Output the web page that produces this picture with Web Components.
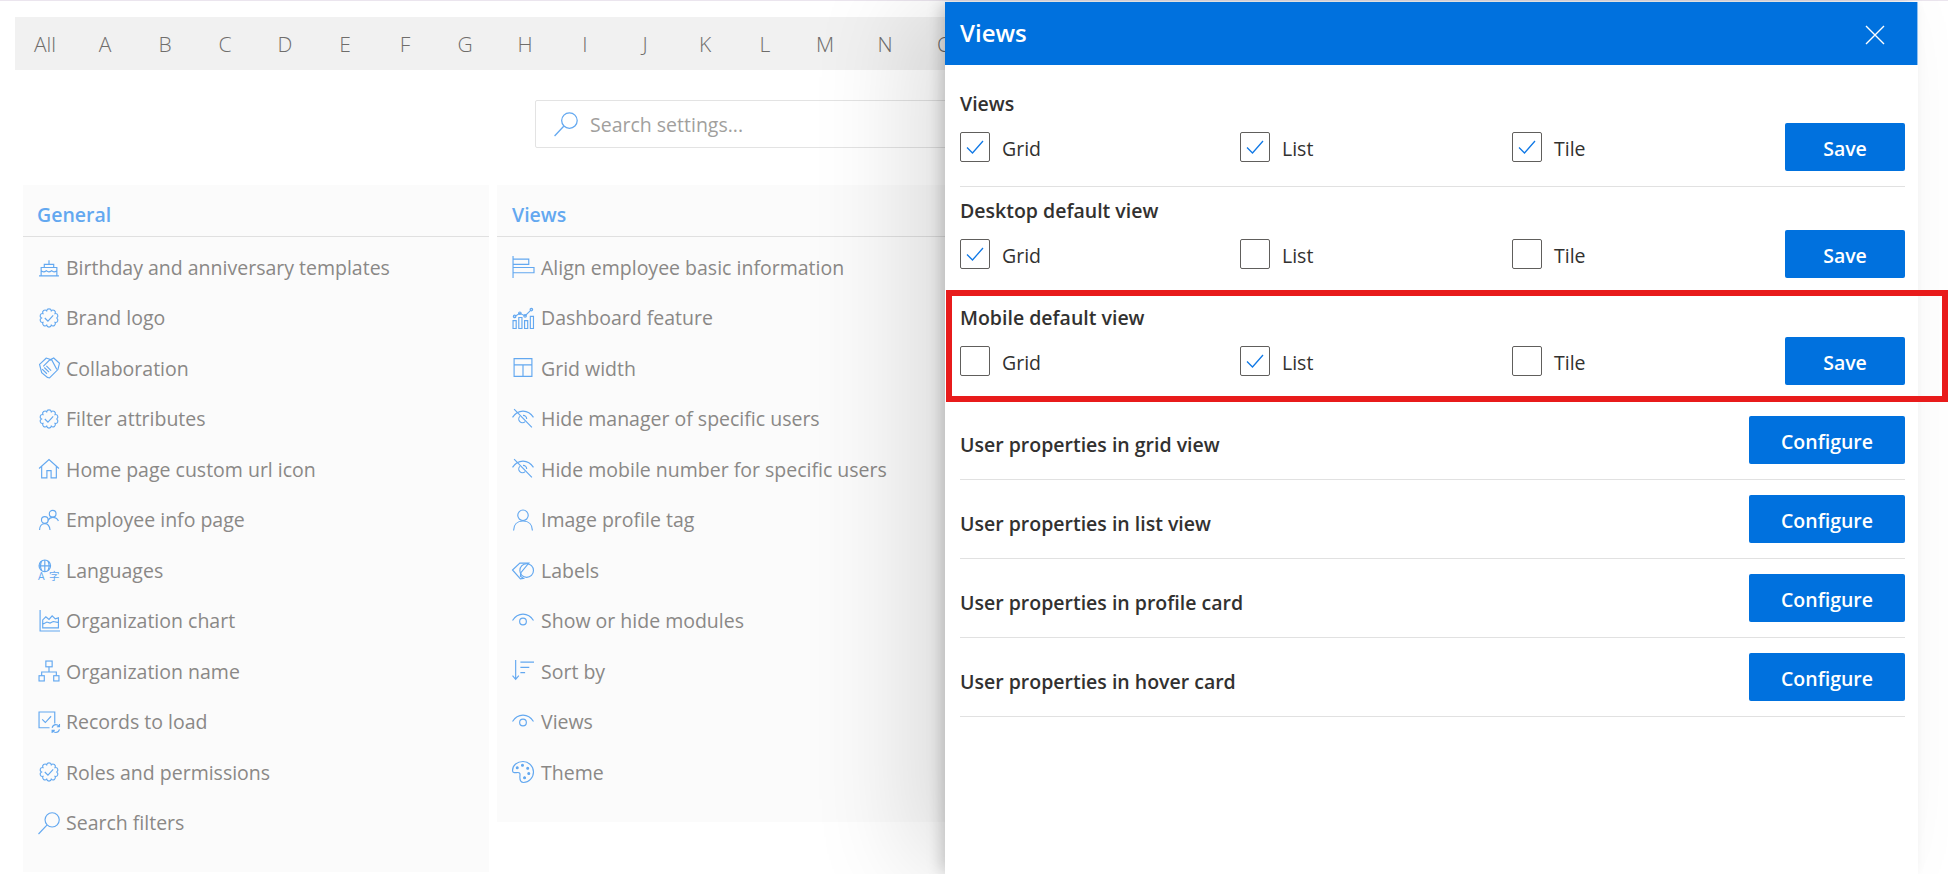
<!DOCTYPE html>
<html>
<head>
<meta charset="utf-8">
<title>Settings</title>
<style>
  html, body { margin: 0; height: 100%; background: #fff; overflow: hidden; }
  body { font-family: "Open Sans", "Noto Sans", sans-serif; }
</style>
</head>
<body>
<settings-page></settings-page>
<views-panel></views-panel>

<script>
// scalloped outline used by the badge icons
function scallop() {
  let d = '';
  for (let i = 0; i <= 10; i++) {
    const a = i * Math.PI / 5;
    const x = (10.5 + 7.2 * Math.cos(a)).toFixed(2);
    const y = (10.5 + 7.2 * Math.sin(a)).toFixed(2);
    d += i ? `A2.25 2.25 0 0 1 ${x} ${y}` : `M${x} ${y}`;
  }
  return d;
}

// stroke icons on a 21 unit grid
const ICONS = {
  cake: '<path d="M1 19h19M3 19v-8h15v8M3 14c1.500 1.500 3 1.500 5 0 1.500 1.500 3 1.500 5 0 1.500 1.500 3 1.500 5 0M6 11V8h9v3M10.500 8V4"/>',
  badge: `<path d="${scallop()}"/><path d="M6.500 10.500l3 3 5-5.500"/>`,
  shake: '<path d="M8 1L1.500 7l2 8 5.500 4.500 2 .5 8-8 1.500-6L15 1l-3 1.500z"/><path d="M5 9l6-6 2-.5 5 9.500M4 11.500l4.500 4.500M6 10l4.500 4.500M8 8.500l4.500 4.500"/>',
  home: '<path d="M1 10L10.500 1.500 20 10M3.500 8v11h5v-7h4v7h5V8"/>',
  people: '<circle cx="14" cy="4.500" r="3.200"/><path d="M9.500 11c1-1.800 2.500-3 4.500-3s4.500 1.200 5.500 3.500"/><circle cx="6.500" cy="10.500" r="3.200"/><path d="M1.500 20c0-3.500 2-6 5-6s4.500 2 5 6"/>',
  lang: '<circle cx="6.500" cy="6.500" r="5.500"/><path d="M1 6.500h11M6.500 1v11M3.500 2c-1.500 3-1.500 6 0 9M9.500 2c1.500 3 1.500 6 0 9"/><text x="0" y="20" font-size="10" font-family="Open Sans, sans-serif" stroke="none" fill="currentColor">A</text><text x="10.500" y="20" font-size="10" font-family="Noto Sans CJK SC, sans-serif" stroke="none" fill="currentColor">字</text>',
  chart: '<path d="M2 0v20h19"/><path d="M4.500 17V9.500l3-3 3 2.500 3-3.500 3 3 3-1V17zM4.500 13.500l4-2 3 1 3-1.500 5.500 1"/>',
  org: '<rect x="7.500" y="1" width="6" height="5.500"/><rect x="1" y="15" width="5" height="5"/><rect x="15" y="15" width="5" height="5"/><path d="M10.500 6.500v5M3.500 15v-3.500h14V15"/>',
  records: '<path d="M16 12V1H1v15h10"/><path d="M4 8l3 3 5.500-6"/><path d="M13.500 16c.5-2 2-3 3.500-3 1.200 0 2.200.5 3 1.500M20.500 12.500V15H18M20.500 17.500c-.5 1.800-2 3-3.500 3-1.200 0-2.200-.5-3-1.500M13.500 21v-2.500H16"/>',
  search: '<circle cx="13.500" cy="7.500" r="6.800"/><path d="M8.500 12.500L.5 21"/>',
  align: '<path d="M1 0v21M1 3h15v5H1M1 11h20v5H1"/>',
  dash: '<path d="M1 13h3v7.500H1zM6.500 10h3v10.500h-3zM12 13h3v7.500h-3zM17.500 9h3v11.500h-3zM2.500 9l5-3 5 2.500 6-6"/><circle cx="2.500" cy="9" r="1.200"/><circle cx="7.500" cy="6" r="1.200"/><circle cx="12.500" cy="8.500" r="1.200"/><circle cx="18.500" cy="2.500" r="1.200"/>',
  grid: '<path d="M2 1.500h17v17H2zM2 7.500h17M10.500 7.500v11"/>',
  hide: '<path d="M.5 9c2.500-4 5.500-6 10-6s7.500 2 10 6M2 1l17 17.500"/><path d="M7.500 8a3.500 3.500 0 1 0 5 5M10.500 7a3.500 3.500 0 0 1 3.500 3.500"/>',
  user: '<circle cx="10.500" cy="6" r="5"/><path d="M1.500 20.500c0-5.500 3.500-9 9-9s9 3.500 9 9"/>',
  label: '<path d="M.5 10.500L7.500 4h8.500l-7.500 9-.5 3.500 3 2-3 .5z"/><circle cx="14" cy="11" r="6.500"/>',
  eye: '<path d="M.5 10c2.500-4 5.500-6 10-6s7.500 2 10 6"/><circle cx="10.500" cy="11" r="3.200"/>',
  sort: '<path d="M3.500 0v18M.5 15l3 3.500 3-3.500M8 2h13M8 7h8.500M8 12h4.500"/>',
  theme: '<path d="M10.500 .5C5 .5.5 4 .5 9c0 3 3 2 5 2 3 0 2 2.500 2 4.500 0 3 1 5 3.500 5 5 0 9.500-4.500 9.500-10S16 .5 10.500.5z"/><circle cx="5" cy="6.500" r=".9" fill="currentColor"/><circle cx="10" cy="4" r=".9" fill="currentColor"/><circle cx="15" cy="7" r=".9" fill="currentColor"/><circle cx="16" cy="12" r=".9" fill="currentColor"/><circle cx="12" cy="16" r=".9" fill="currentColor"/>'
};

class SetIcon extends HTMLElement {
  connectedCallback() {
    const root = this.attachShadow({ mode: 'open' });
    root.innerHTML = `
      <style>
        :host { display: block; width: var(--icon-size, 22px); height: var(--icon-size, 22px); color: #63a8f0; flex-shrink: 0; }
        svg { display: block; width: 100%; height: 100%; fill: none; stroke: currentColor; stroke-width: 1.1; overflow: visible; }
      </style>
      <svg viewBox="0 0 21 21">${ICONS[this.getAttribute('name')]}</svg>`;
  }
}
customElements.define('set-icon', SetIcon);

class SettingsCard extends HTMLElement {
  connectedCallback() {
    const items = JSON.parse(this.getAttribute('items'));
    const root = this.attachShadow({ mode: 'open' });
    root.innerHTML = `
      <style>
        :host { display: block; background: #fbfbfb; box-sizing: border-box; }
        h3 { margin: 0; height: 52px; box-sizing: border-box; padding: 13px 15px 0 var(--head-left, 15px); border-bottom: 1px solid #e0e0e0;
             font-size: 19.5px; font-weight: 600; line-height: 34px; color: #63a8f0; }
        ul { list-style: none; margin: 0; padding: 5px 15px 0; }
        li { display: flex; align-items: center; gap: var(--item-gap, 7px); height: 50.5px; font-size: 19.5px; color: #8a8886; white-space: nowrap; }
      </style>
      <h3>${this.getAttribute('heading')}</h3>
      <ul>${items.map(i => `<li><set-icon name="${i[0]}"></set-icon><span>${i[1]}</span></li>`).join('')}</ul>`;
  }
}
customElements.define('settings-card', SettingsCard);

class SettingsPage extends HTMLElement {
  connectedCallback() {
    const letters = ['All', ...'ABCDEFGHIJKLMNO'];
    const general = [['cake','Birthday and anniversary templates'],['badge','Brand logo'],['shake','Collaboration'],['badge','Filter attributes'],['home','Home page custom url icon'],['people','Employee info page'],['lang','Languages'],['chart','Organization chart'],['org','Organization name'],['records','Records to load'],['badge','Roles and permissions'],['search','Search filters']];
    const views = [['align','Align employee basic information'],['dash','Dashboard feature'],['grid','Grid width'],['hide','Hide manager of specific users'],['hide','Hide mobile number for specific users'],['user','Image profile tag'],['label','Labels'],['eye','Show or hide modules'],['sort','Sort by'],['eye','Views'],['theme','Theme']];
    const root = this.attachShadow({ mode: 'open' });
    root.innerHTML = `
      <style>
        :host { display: block; border-top: 1px solid #ebe5ee; height: 873px; overflow: hidden; box-sizing: border-box; }
        .letters { display: flex; overflow: hidden; margin: 16px 0 0 15px; height: 53px; width: 1100px; background: #f1f1f1; font-size: 21px; font-weight: 300; color: #6f6d6b; align-items: center; }
        .letters span { width: 60px; text-align: center; flex-shrink: 0; }
        .search { display: flex; align-items: center; gap: 12px; box-sizing: border-box; margin: 30px 0 0 535px; width: 500px; height: 48px; padding-left: 18px;
                  border: 1px solid #e3e3e3; border-radius: 2px; font-size: 19.5px; color: #a19f9d; --icon-size: 24px; }
        .cards { display: flex; gap: 8px; margin: 37px 0 0 23px; align-items: flex-start; }
        settings-card:nth-child(1) { width: 466px; height: 687px; --item-gap: 6px; --head-left: 14px; }
        settings-card:nth-child(2) { width: 600px; height: 637px; }
      </style>
      <div class="letters">${letters.map(l => `<span>${l}</span>`).join('')}</div>
      <div class="search"><set-icon name="search"></set-icon><span>Search settings...</span></div>
      <div class="cards">
        <settings-card heading="General" items='${JSON.stringify(general)}'></settings-card>
        <settings-card heading="Views" items='${JSON.stringify(views)}'></settings-card>
      </div>`;
  }
}
customElements.define('settings-page', SettingsPage);

class ViewCheck extends HTMLElement {
  connectedCallback() {
    const on = this.hasAttribute('checked');
    const root = this.attachShadow({ mode: 'open' });
    root.innerHTML = `
      <style>
        :host { display: flex; align-items: center; gap: 12px; font-size: 19.5px; color: #323130; }
        .box { width: 28px; height: 28px; border: 1px solid #605e5c; border-radius: 2px; display: flex; align-items: center; justify-content: center; }
        svg { width: 18px; height: 18px; fill: none; stroke: #0f78e6; stroke-width: 1.3; }
        span { padding-top: 2px; }
      </style>
      <div class="box">${on ? '<svg viewBox="0 0 18 18"><path d="M1 9.500l5.500 5.500L17 3"/></svg>' : ''}</div>
      <span><slot></slot></span>`;
  }
}
customElements.define('view-check', ViewCheck);

class ActionButton extends HTMLElement {
  connectedCallback() {
    const root = this.attachShadow({ mode: 'open' });
    root.innerHTML = `
      <style>
        :host { display: flex; align-items: center; justify-content: center; height: 48px; box-sizing: border-box; padding-top: 2px; background: #0071de; color: #fff;
                border-radius: 2px; font-size: 19.5px; font-weight: 600; }
      </style><slot></slot>`;
  }
}
customElements.define('action-button', ActionButton);

class ViewGroup extends HTMLElement {
  connectedCallback() {
    const checks = (this.getAttribute('checks') || '').split(',');
    const cell = n => `<view-check ${checks.includes(n) ? 'checked' : ''}>${n}</view-check>`;
    const root = this.attachShadow({ mode: 'open' });
    root.innerHTML = `
      <style>
        :host { display: block; height: 107px; box-sizing: border-box; border-bottom: 1px solid #e1e1e1; }
        h4 { margin: 0; height: 43px; box-sizing: border-box; padding-top: 9px; font-size: 19.5px; font-weight: 600; line-height: 30px; color: #323130; }
        .row { display: grid; grid-template-columns: 280px 272px 273px 120px; align-items: center; height: 48px; }
      </style>
      <h4>${this.getAttribute('heading')}</h4>
      <div class="row">${cell('Grid')}${cell('List')}${cell('Tile')}<action-button>Save</action-button></div>`;
  }
}
customElements.define('view-group', ViewGroup);

class ConfigRow extends HTMLElement {
  connectedCallback() {
    const root = this.attachShadow({ mode: 'open' });
    root.innerHTML = `
      <style>
        :host { display: flex; justify-content: space-between; height: 79px; box-sizing: border-box; padding-top: 15px; border-bottom: 1px solid #e1e1e1; font-size: 19.5px; font-weight: 600; color: #323130; }
        span { padding-top: 14px; line-height: 30px; }
        action-button { width: 156px; }
      </style>
      <span><slot></slot></span><action-button>Configure</action-button>`;
  }
}
customElements.define('config-row', ConfigRow);

class ViewsPanel extends HTMLElement {
  connectedCallback() {
    const root = this.attachShadow({ mode: 'open' });
    root.innerHTML = `
      <style>
        :host { position: absolute; top: 2px; left: 945px; width: 973px; bottom: 0; background: #fff;
                box-shadow: -45px 0 90px -5px rgba(0,0,0,.12), -6px 0 14px -2px rgba(0,0,0,.18); }
        header { height: 63px; box-sizing: border-box; background: #0071de; border-right: 1px solid #8fc0f0; color: #fff; display: flex; align-items: center; justify-content: space-between; padding: 0 32px 0 15px; font-size: 24px; font-weight: 600; }
        header span { margin-top: -2px; }
        svg { width: 20px; height: 20px; stroke: #fff; stroke-width: 1.4; fill: none; margin-top: 3px; }
        main { padding: 15px 13px 0 15px; }
        .mark { position: absolute; left: 1px; top: 288px; width: 1002px; height: 112px; box-sizing: border-box; border: 6px solid #e81b1b; pointer-events: none; }
      </style>
      <header><span>Views</span><svg viewBox="0 0 20 20"><path d="M1 1l18 18M19 1L1 19"/></svg></header>
      <main>
        <view-group heading="Views" checks="Grid,List,Tile"></view-group>
        <view-group heading="Desktop default view" checks="Grid"></view-group>
        <view-group heading="Mobile default view" checks="List"></view-group>
        <config-row>User properties in grid view</config-row>
        <config-row>User properties in list view</config-row>
        <config-row>User properties in profile card</config-row>
        <config-row>User properties in hover card</config-row>
      </main>
      <div class="mark"></div>`;
  }
}
customElements.define('views-panel', ViewsPanel);
</script>
</body>
</html>
